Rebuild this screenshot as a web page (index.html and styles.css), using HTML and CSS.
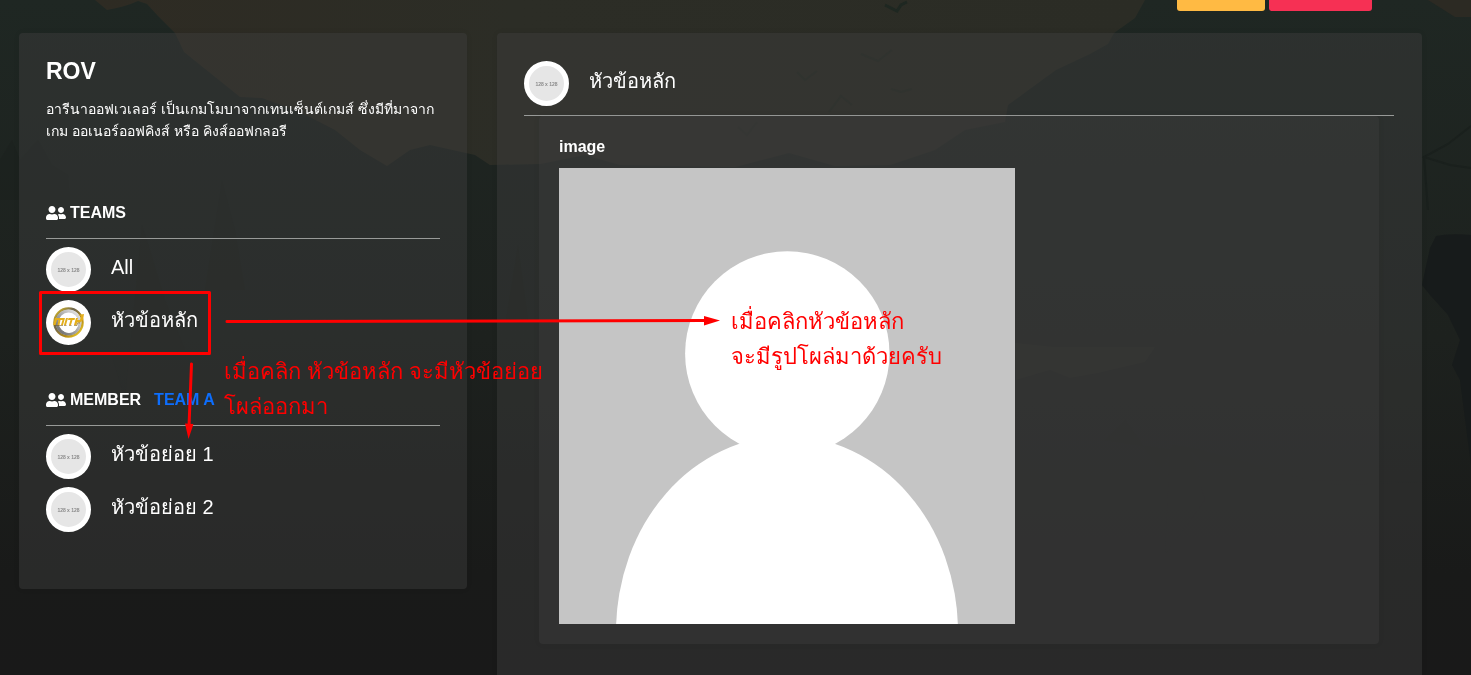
FILE: index.html
```html
<!DOCTYPE html>
<html lang="th">
<head>
<meta charset="utf-8">
<meta name="viewport" content="width=device-width, initial-scale=1">
<title>ROV</title>
<link rel="stylesheet" href="styles.css">
</head>
<body>
<svg class="scene" viewBox="0 0 1471 675" preserveAspectRatio="none" aria-hidden="true">
  <defs>
    <linearGradient id="hill" x1="0" y1="0" x2="0" y2="1">
      <stop offset="0" stop-color="#1f2723"/><stop offset=".5" stop-color="#1d211e"/><stop offset=".85" stop-color="#191a19"/><stop offset="1" stop-color="#191919"/>
    </linearGradient>
    <linearGradient id="sky" x1="0" y1="0" x2="1" y2="0">
      <stop offset="0" stop-color="#2e2b23"/><stop offset=".4" stop-color="#2c2d26"/><stop offset="1" stop-color="#2b2c25"/>
    </linearGradient>
  </defs>
  <path fill="url(#hill)" d="M0 0H1471V675H0z"/>
  <path fill="url(#sky)" d="M95 0L107 10Q125 7 138 1L147 4L158 16L175 33L184 52L240 97L262 98L300 112L335 130L360 150L387 166L410 150L430 145L475 155L490 165L540 164L585 155L620 165L735 167L789 153L835 166L890 165L935 150L965 130L1005 122L1008 105L1045 78L1056 70L1090 54L1108 44L1114 33L1135 18L1145 0z"/>
  <path fill="#2c2a23" d="M1428 0L1455 17H1471V0z"/>
  <path fill="#171b1b" d="M1422 285L1430 248L1436 236Q1450 233 1471 235V465L1460 380L1452 365L1460 340L1448 315L1430 295z"/>
  <path fill="none" stroke="#1a201d" stroke-width="2" d="M1471 126L1448 144L1424 157L1450 165L1471 168M1424 157L1428 210"/>
  <path fill="#2a2a23" opacity=".6" d="M1015 343L1035 345L1055 347L1155 347L1145 362L1098 373L1070 378L1050 370L1016 380z"/>
  <g fill="#1a1d1b" opacity=".3">
    <path d="M0 160L12 140L20 160L38 140L52 165L68 175L70 200H0zM205 290L222 180L235 230L245 290zM125 400L142 225L150 250L165 300L185 350H110zM1105 440L1125 420L1160 470L1173 445L1200 450L1310 480L1422 482L1340 485L1200 460L1190 450L1205 500L1165 555L1170 450zM506 320L518 245L528 320z"/>
  </g>
  <g fill="none" stroke="#1e2721" stroke-width="2">
    <path stroke-width="3" d="M885 5L897 11L901 5L907 2"/>
    <path opacity=".45" d="M861 54L878 61L892 50M797 72L805 80L817 71M891 89L901 92L912 89M829 112L841 96L852 105M738 127L747 135L757 122"/>
  </g>
</svg>

<div class="page">
  <div class="toolbar">
    <button class="tool tool-warn" type="button" aria-label="แก้ไข"></button>
    <button class="tool tool-danger" type="button" aria-label="ลบ"></button>
  </div>

  <div class="layout">
    <aside class="panel sidebar">
      <h1 class="game">ROV</h1>
      <p class="about">อารีนาออฟเวเลอร์ เป็นเกมโมบาจากเทนเซ็นต์เกมส์ ซึ่งมีที่มาจากเกม ออเนอร์ออฟคิงส์ หรือ คิงส์ออฟกลอรี</p>

      <h2 class="section teams">
        <svg class="users" viewBox="0 0 640 512" aria-hidden="true"><path d="M192 256c61.900 0 112-50.100 112-112S253.900 32 192 32 80 82.100 80 144s50.100 112 112 112zm76.800 32h-8.300c-20.800 10-43.900 16-68.500 16s-47.600-6-68.500-16h-8.300C51.600 288 0 339.600 0 403.200V432c0 26.500 21.500 48 48 48h288c26.500 0 48-21.500 48-48v-28.800c0-63.600-51.600-115.200-115.200-115.200zM480 256c53 0 96-43 96-96s-43-96-96-96-96 43-96 96 43 96 96 96zm48 32h-3.800c-13.900 4.800-28.600 8-44.200 8s-30.300-3.200-44.200-8H432c-20.400 0-39.200 5.900-55.700 15.400 24.400 26.300 39.700 61.200 39.700 99.800v38.400c0 2.200-.5 4.300-.6 6.400H592c26.500 0 48-21.500 48-48 0-61.900-50.100-112-112-112z"/></svg>
        <span>TEAMS</span>
      </h2>
      <nav class="list">
        <a class="row" href="#all"><span class="avatar blank">128 x 128</span><span class="name">All</span></a>
        <a class="row" href="#main">
          <svg class="avatar" viewBox="0 0 45 45" aria-hidden="true">
            <defs>
              <linearGradient id="gold" x1="0" y1="0" x2="1" y2="1"><stop offset="0" stop-color="#e8c51c"/><stop offset=".35" stop-color="#6d6550"/><stop offset=".7" stop-color="#b88d12"/><stop offset="1" stop-color="#f8df38"/></linearGradient>
              <linearGradient id="steel" x1="0" y1="1" x2="1" y2="0"><stop offset="0" stop-color="#666"/><stop offset=".5" stop-color="#a8a8a8"/><stop offset="1" stop-color="#eee"/></linearGradient>
            </defs>
            <circle cx="22.500" cy="22.500" r="22.500" fill="#fff"/>
            <circle cx="22.500" cy="22.500" r="14" fill="none" stroke="url(#gold)" stroke-width="2.500"/>
            <circle cx="22.500" cy="22.500" r="11.500" fill="none" stroke="url(#steel)" stroke-width="3"/>
            <circle cx="23" cy="24" r="9" fill="#fff"/>
            <path fill="#e3ae1b" d="M9 18H19L17 25H15L16.500 20H14.500L13.500 25H11.500L12.500 20H11L9.500 25H7zM20 18H22L20 25H18zM22.500 18H29L28.500 20H26.500L25 25H23L24.500 20H22zM30 18H32L31.500 20H34L35 16L32 15L38 14L37 20L34 22.500H31L30.500 25H28z"/>
            <path fill="none" stroke="#80601a" stroke-width=".6" d="M8 25.500H17M18 25.500H20.500M23 25.500H25.500M28 25.500H31L31.500 23H34"/>
          </svg>
          <span class="name">หัวข้อหลัก</span>
        </a>
      </nav>

      <h2 class="section members">
        <svg class="users" viewBox="0 0 640 512" aria-hidden="true"><path d="M192 256c61.900 0 112-50.100 112-112S253.900 32 192 32 80 82.100 80 144s50.100 112 112 112zm76.800 32h-8.300c-20.800 10-43.900 16-68.500 16s-47.600-6-68.500-16h-8.300C51.600 288 0 339.600 0 403.200V432c0 26.500 21.500 48 48 48h288c26.500 0 48-21.500 48-48v-28.800c0-63.600-51.600-115.200-115.200-115.200zM480 256c53 0 96-43 96-96s-43-96-96-96-96 43-96 96 43 96 96 96zm48 32h-3.800c-13.900 4.800-28.600 8-44.200 8s-30.300-3.200-44.200-8H432c-20.400 0-39.200 5.900-55.700 15.400 24.400 26.300 39.700 61.200 39.700 99.800v38.400c0 2.200-.5 4.300-.6 6.400H592c26.500 0 48-21.500 48-48 0-61.900-50.100-112-112-112z"/></svg>
        <span>MEMBER</span><a class="team" href="#team-a">TEAM A</a>
      </h2>
      <nav class="list">
        <a class="row" href="#sub1"><span class="avatar blank">128 x 128</span><span class="name">หัวข้อย่อย 1</span></a>
        <a class="row" href="#sub2"><span class="avatar blank">128 x 128</span><span class="name">หัวข้อย่อย 2</span></a>
      </nav>
    </aside>

    <main class="panel content" id="main">
      <header class="row heading"><span class="avatar blank">128 x 128</span><span class="name">หัวข้อหลัก</span></header>
      <section class="card">
        <h3 class="caption">image</h3>
        <svg class="photo" viewBox="0 0 456 456" role="img" aria-label="image">
          <path fill="#c5c5c5" d="M0 0H456V456H0z"/>
          <circle fill="#fff" cx="228.300" cy="185.500" r="102.200"/>
          <ellipse fill="#fff" cx="228" cy="464" rx="171" ry="196"/>
        </svg>
      </section>
    </main>
  </div>
</div>

<div class="notes">
  <svg class="marks" width="760" height="480" aria-hidden="true">
    <g fill="none" stroke="#f00" stroke-width="3" stroke-linecap="round" stroke-linejoin="round">
      <path d="M40.500 292.500H209.500V353.500H40.500z"/>
      <path d="M227 321.500L706 320.500M191.500 364L189 426"/>
    </g>
    <path fill="#f00" d="M704 316L720 320.500L704 325.500zM185 423.500L193.500 424L188.500 439z"/>
  </svg>
  <p class="note note-sub">เมื่อคลิก หัวข้อหลัก จะมีหัวข้อย่อย<br>โผล่ออกมา</p>
  <p class="note note-image">เมื่อคลิกหัวข้อหลัก<br>จะมีรูปโผล่มาด้วยครับ</p>
</div>
</body>
</html>
```

FILE: styles.css
```css
* { box-sizing: border-box; }

body {
  margin: 0;
  background: #191919;
  color: #fff;
  font-family: "Liberation Sans", Arial, sans-serif;
}

h1, h2, h3, p { margin: 0; }
a { color: inherit; text-decoration: none; }

.scene {
  position: fixed;
  inset: 0;
  z-index: -1;
  width: 100%;
  height: 100%;
}

.page {
  display: flex;
  flex-direction: column;
  min-height: 100vh;
  padding: 0 49px 0 19px;
}

.toolbar {
  display: flex;
  justify-content: flex-end;
  align-items: flex-start;
  gap: 4px;
  padding: 0 50px 22px 0;
}
.tool {
  height: 11px;
  padding: 0;
  border: 0;
  border-radius: 0 0 3px 3px;
}
.tool-warn { width: 88px; background: #ffba43; }
.tool-danger { width: 103px; background: #f63054; }

.layout {
  flex: 1;
  display: grid;
  grid-template-columns: 448fr 925fr;
  gap: 30px;
}

.panel {
  background: rgba(63, 63, 63, .45);
  border-radius: 4px;
  box-shadow: 0 0 6px rgba(0, 0, 0, .06);
}
.sidebar { align-self: start; padding: 24px 27px 57px; }
.content { padding: 28px 28px 31px 27px; border-radius: 4px 4px 0 0; }

.game { font-size: 23px; line-height: 28px; }
.about { margin-top: 13px; font-size: 14px; font-weight: 500; line-height: 22px; }

.section {
  display: flex;
  align-items: center;
  gap: 4px;
  padding-bottom: 13px;
  border-bottom: 1px solid #989a98;
  font-size: 16px;
  line-height: 24px;
}
.teams { margin-top: 59px; }
.members { margin-top: 43px; }
.users { width: 20px; height: 16px; fill: #fff; }
.team { margin-left: 9px; color: #0d6efd; }

.list { display: grid; gap: 8px; padding-top: 8px; }
.row { display: flex; align-items: center; gap: 20px; }
.avatar { flex: none; width: 45px; height: 45px; }
.blank {
  display: grid;
  place-items: center;
  border: 5px solid #fff;
  border-radius: 50%;
  background: #e6e6e6;
  color: #8a8a8a;
  font: bold 5px/6px "Liberation Sans", Arial, sans-serif;
  white-space: nowrap;
}
.name { padding-bottom: 6px; font-size: 20px; font-weight: 500; line-height: 24px; }

.heading { padding-bottom: 9px; border-bottom: 1px solid #989a98; }
.card {
  margin: 0 15px;
  padding: 19px 20px 20px;
  border-radius: 4px;
  background: rgba(63, 63, 63, .4);
  box-shadow: 0 0 6px rgba(0, 0, 0, .06);
}
.caption { margin-bottom: 9px; font-size: 16px; line-height: 24px; }
.photo { display: block; width: 100%; max-width: 456px; }

/* Annotations drawn over the page */
.notes { position: absolute; top: 0; left: 0; pointer-events: none; }
.marks { position: absolute; top: 0; left: 0; }
.note {
  position: absolute;
  color: #f00;
  font-size: 22px;
  line-height: 35px;
  white-space: nowrap;
}
.note-sub { top: 354px; left: 224px; }
.note-image { top: 304px; left: 731px; }
```
